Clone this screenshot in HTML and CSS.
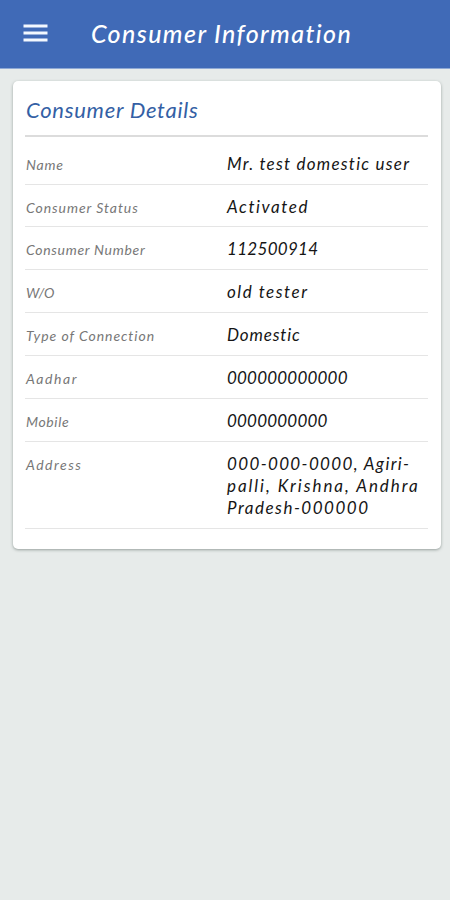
FILE: index.html
```html
<!DOCTYPE html>
<html lang="en">
<head>
<meta charset="utf-8">
<title>Consumer Information</title>
<link rel="stylesheet" href="styles.css">
</head>
<body>
<header class="bar">
  <svg class="menu" width="25" height="18" viewBox="0 0 25 18"><path d="M.5 2h24M.5 9h24M.5 16h24" stroke="#f3f8ff" stroke-width="3"/></svg>
  <h1 class="title">Consumer Information</h1>
</header>
<main class="card">
  <h2 class="heading">Consumer Details</h2>
  <dl class="details">
    <div class="row"><dt class="name-label">Name</dt><dd class="name">Mr. test domestic user</dd></div>
    <div class="row"><dt class="status-label">Consumer Status</dt><dd class="status">Activated</dd></div>
    <div class="row"><dt class="number-label">Consumer Number</dt><dd class="number">112500914</dd></div>
    <div class="row"><dt class="relation-label">W/O</dt><dd class="relation">old tester</dd></div>
    <div class="row"><dt class="type-label">Type of Connection</dt><dd class="type">Domestic</dd></div>
    <div class="row"><dt class="aadhar-label">Aadhar</dt><dd class="digits">000000000000</dd></div>
    <div class="row"><dt class="mobile-label">Mobile</dt><dd class="digits">0000000000</dd></div>
    <div class="row address-row"><dt class="address-label">Address</dt><dd class="address"><span class="line1">000-000-0000, Agiri-</span><br><span class="line2">palli, Krishna, Andhra</span><br><span class="line3">Pradesh-000000</span></dd></div>
  </dl>
</main>
</body>
</html>
```

FILE: styles.css
```css
* { box-sizing: border-box; }
body {
  margin: 0;
  min-height: 900px;
  background: #e7ebea;
  font-family: Lato, sans-serif;
  font-style: italic;
  font-variant-ligatures: none;
  overflow: hidden;
}
.bar {
  display: flex;
  align-items: center;
  height: 69px;
  padding: 0 23px 2px;
  background: #406ab7;
  border-bottom: 1px solid #8fa9d5;
  color: #fff;
}
.menu { flex: none; }
.title {
  margin: 0 0 0 43px;
  font-size: 25px;
  font-weight: 500;
  line-height: 30px;
  white-space: nowrap;
  letter-spacing: 1.4px;
}
.card {
  height: 468px;
  margin: 12px 9px 0 13px;
  padding: 0 13px 0 12px;
  background: #fff;
  border-radius: 5px;
  box-shadow: 0 1px 3px rgba(70, 85, 80, .5);
}
.heading {
  height: 56px;
  margin: 0;
  padding: 14px 0 0 1px;
  border-bottom: 2px solid #dcdcdc;
  color: #345fa5;
  font-size: 22px;
  font-weight: 400;
  line-height: 30px;
  letter-spacing: .74px;
}
.details { margin: 0; }
.row {
  display: grid;
  grid-template-columns: 201px 1fr;
  height: 42.9px;
  padding: 11px 0 0 1px;
  border-bottom: 1px solid #e5e5e5;
  white-space: nowrap;
}
.row:first-child { height: 47.5px; padding-top: 16px; }
dt { padding-top: 1px; color: #777; font-size: 14px; line-height: 22px; }
dd { margin: 0; color: #151515; font-size: 17px; line-height: 22px; }
.address-row { height: 87.5px; }
.digits { letter-spacing: .2px; }
.number { letter-spacing: .3px; }
.name { letter-spacing: 1.25px; }
.status { letter-spacing: 1.6px; }
.relation { letter-spacing: 1.55px; }
.type { letter-spacing: .85px; }
.line1 { letter-spacing: 1.35px; }
.line2 { letter-spacing: 1.95px; }
.line3 { letter-spacing: 1.5px; }
.name-label { letter-spacing: .8px; }
.status-label { letter-spacing: .95px; }
.number-label { letter-spacing: .7px; }
.relation-label { letter-spacing: -.3px; }
.type-label { letter-spacing: .95px; }
.aadhar-label { letter-spacing: 1.6px; }
.mobile-label { letter-spacing: .6px; }
.address-label { letter-spacing: 1.5px; }
```
